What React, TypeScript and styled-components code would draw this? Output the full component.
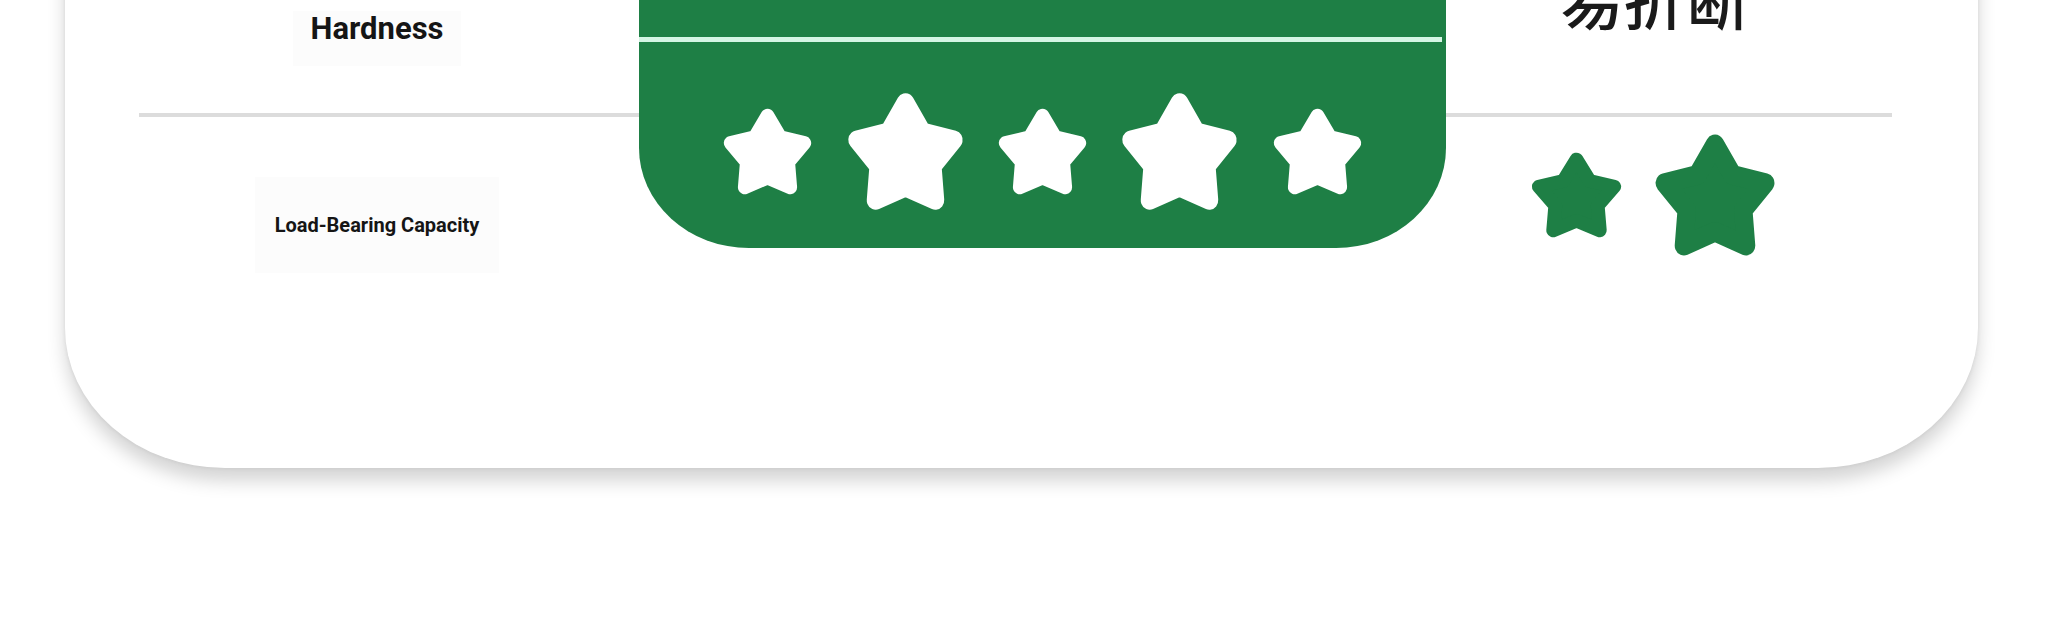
import React from "react";
import styled, { createGlobalStyle } from "styled-components";

const GREEN = "#1e7f45";

const GlobalStyle = createGlobalStyle`
  *, *::before, *::after { box-sizing: border-box; }
  html, body { margin: 0; padding: 0; background: #ffffff; }
  body { font-family: Roboto, "Noto Sans", "Liberation Sans", sans-serif; overflow: hidden; }
`;

const Page = styled.div`
  display: flow-root;
  width: 2048px;
  height: 624px;
  overflow: hidden;
  background: #ffffff;
`;

const Card = styled.section`
  width: 1913px;
  margin: -120px 0 0 65px;
  padding: 0 86px 135px 74px;
  background: #ffffff;
  display: grid;
  grid-template-columns: 500px 807px 1fr;
  align-items: start;
  border-radius: 0 0 160px 160px / 0 0 140px 140px;
  box-shadow: 0 13px 18px rgba(0, 0, 0, 0.17), 0 0 4px rgba(0, 0, 0, 0.08);
`;

const Column = styled.div`
  display: flex;
  flex-direction: column;
`;

const Row = styled.div<{
  $height: number;
  $divider?: boolean;
  $align?: "flex-start" | "center" | "flex-end";
  $padTop?: number;
  $padBottom?: number;
  $padRight?: number;
}>`
  height: ${(p) => p.$height}px;
  display: flex;
  justify-content: center;
  align-items: ${(p) => p.$align ?? "center"};
  padding-top: ${(p) => p.$padTop ?? 0}px;
  padding-bottom: ${(p) => p.$padBottom ?? 0}px;
  padding-right: ${(p) => p.$padRight ?? 0}px;
  border-bottom: ${(p) => (p.$divider ? "4px solid #dcdcdc" : "none")};
`;

const Label = styled.div<{ $size: number; $line: number; $pad: string }>`
  background: #fcfcfc;
  padding: ${(p) => p.$pad};
  font-family: Roboto, "Liberation Sans", sans-serif;
  font-weight: 700;
  font-size: ${(p) => p.$size}px;
  line-height: ${(p) => p.$line}px;
  color: #151515;
  white-space: nowrap;
`;

const ChineseText = styled.div`
  font-family: "Noto Sans CJK SC", "Noto Sans", sans-serif;
  font-weight: 500;
  font-size: 63px;
  line-height: 63px;
  color: #1a1a1a;
  white-space: nowrap;
`;

const GreenPanel = styled.div`
  background: ${GREEN};
  border-radius: 0 0 110px 110px / 0 0 100px 100px;
  display: flex;
  flex-direction: column;
`;

const PanelTop = styled.div`
  height: 157px;
`;

const PanelLine = styled.div`
  height: 5px;
  margin-right: 4px;
  background: #d4f5e4;
`;

const PanelStars = styled.div`
  height: 206px;
  padding-top: 12px;
  display: flex;
  justify-content: center;
  align-items: center;
  gap: 25.4px;
`;

const StarGroup = styled.div<{ $gap: number }>`
  display: flex;
  align-items: center;
  gap: ${(p) => p.$gap}px;
`;

const StarSvg = styled.svg`
  display: block;
  flex: none;
`;

function starPoints(R: number, r: number, cx: number, cy: number) {
  const pts: string[] = [];
  for (let i = 0; i < 10; i++) {
    const a = ((-90 + i * 36) * Math.PI) / 180;
    const rad = i % 2 === 0 ? R : r;
    pts.push(`${(cx + rad * Math.cos(a)).toFixed(2)},${(cy + rad * Math.sin(a)).toFixed(2)}`);
  }
  return pts.join(" ");
}

const STAR = starPoints(40, 22.5, 50, 53.8);

function Star({ w, h, color }: { w: number; h: number; color: string }) {
  return (
    <StarSvg width={w} height={h} viewBox="0 0 100 100" preserveAspectRatio="none" aria-hidden="true">
      <polygon points={STAR} fill={color} stroke={color} strokeWidth={14} strokeLinejoin="round" />
    </StarSvg>
  );
}

export default function App() {
  return (
    <>
      <GlobalStyle />
      <Page>
        <Card>
          <Column>
            <Row $height={237} $divider $align="flex-end" $padBottom={47} $padRight={24}>
              <Label $size={31} $line={36} $pad="0 18px 19px">
                Hardness
              </Label>
            </Row>
            <Row $height={216} $padRight={24}>
              <Label $size={20} $line={24} $pad="36px 20px">
                Load-Bearing Capacity
              </Label>
            </Row>
          </Column>

          <GreenPanel>
            <PanelTop />
            <PanelLine />
            <PanelStars>
              <Star w={97} h={99} color="#ffffff" />
              <Star w={127} h={135} color="#ffffff" />
              <Star w={97} h={99} color="#ffffff" />
              <Star w={127} h={135} color="#ffffff" />
              <Star w={97} h={99} color="#ffffff" />
            </PanelStars>
          </GreenPanel>

          <Column>
            <Row $height={237} $divider $align="flex-end" $padBottom={85} $padRight={28}>
              <ChineseText>易折断</ChineseText>
            </Row>
            <Row $height={216} $align="flex-start" $padTop={7.5} $padRight={30}>
              <StarGroup $gap={22.5}>
                <Star w={99} h={98} color={GREEN} />
                <Star w={132} h={140} color={GREEN} />
              </StarGroup>
            </Row>
          </Column>
        </Card>
      </Page>
    </>
  );
}
